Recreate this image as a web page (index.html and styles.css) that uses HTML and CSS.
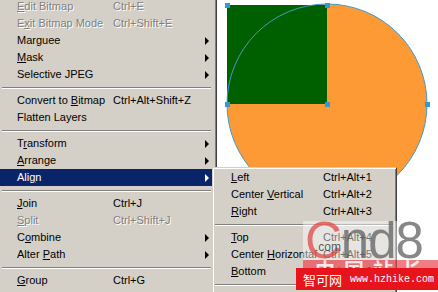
FILE: index.html
```html
<!DOCTYPE html>
<html lang="en">
<head>
  <meta charset="UTF-8" />
  <title>Modify Menu - Align</title>
  <link rel="stylesheet" href="styles.css">
</head>
<body>
  <div class="menu">
    <div class="item disabled"><span class="label"><u>E</u>dit Bitmap</span><span class="key">Ctrl+E</span></div>
    <div class="item disabled"><span class="label">E<u>x</u>it Bitmap Mode</span><span class="key">Ctrl+Shift+E</span></div>
    <div class="item"><span class="label">Marguee</span><span class="arrow"></span></div>
    <div class="item"><span class="label"><u>M</u>ask</span><span class="arrow"></span></div>
    <div class="item"><span class="label">Selective JPEG</span><span class="arrow"></span></div>
    <div class="sep"></div>
    <div class="item"><span class="label">Convert to <u>B</u>itmap</span><span class="key">Ctrl+Alt+Shift+Z</span></div>
    <div class="item"><span class="label">Flatten Layers</span></div>
    <div class="sep"></div>
    <div class="item"><span class="label">T<u>r</u>ansform</span><span class="arrow"></span></div>
    <div class="item"><span class="label"><u>A</u>rrange</span><span class="arrow"></span></div>
    <div class="item active"><span class="label">Ali<u>g</u>n</span><span class="arrow"></span></div>
    <div class="sep"></div>
    <div class="item"><span class="label"><u>J</u>oin</span><span class="key">Ctrl+J</span></div>
    <div class="item disabled"><span class="label"><u>S</u>plit</span><span class="key">Ctrl+Shift+J</span></div>
    <div class="item"><span class="label">C<u>o</u>mbine</span><span class="arrow"></span></div>
    <div class="item"><span class="label">Alter <u>P</u>ath</span><span class="arrow"></span></div>
    <div class="sep"></div>
    <div class="item"><span class="label"><u>G</u>roup</span><span class="key">Ctrl+G</span></div>
  </div>

  <div class="canvas">
    <svg width="221" height="292" viewBox="0 0 221 292">
      <circle cx="110" cy="104" r="100" fill="#fd9a35" />
      <rect x="10" y="5" width="100" height="99" fill="#006000" />
      <circle cx="110" cy="104" r="100" fill="none" stroke="#3c9ccc" stroke-width="1" />
      <g fill="#2f9ad6">
        <rect x="8" y="3" width="5" height="5" />
        <rect x="108" y="3" width="5" height="5" />
        <rect x="8" y="102" width="5" height="5" />
        <rect x="108" y="102" width="5" height="5" />
        <rect x="208" y="102" width="5" height="5" />
      </g>
    </svg>
  </div>

  <div class="submenu">
    <div class="item"><span class="label"><u>L</u>eft</span><span class="key">Ctrl+Alt+1</span></div>
    <div class="item"><span class="label">Center <u>V</u>ertical</span><span class="key">Ctrl+Alt+2</span></div>
    <div class="item"><span class="label"><u>R</u>ight</span><span class="key">Ctrl+Alt+3</span></div>
    <div class="sep"></div>
    <div class="item"><span class="label"><u>T</u>op</span><span class="key">Ctrl+Alt+4</span></div>
    <div class="item"><span class="label">Center <u>H</u>orizontal</span><span class="key">Ctrl+Alt+5</span></div>
    <div class="item"><span class="label"><u>B</u>ottom</span><span class="key">Ctrl+Alt+6</span></div>
    <div class="sep"></div>
  </div>

  <!-- watermark stamped over the screenshot -->
  <div class="watermark">
    <div class="wm-logo"><span class="wm-c">C</span>nd8<span class="wm-com">.com</span></div>
    <div class="wm-strip">中国站长下载吧</div>
    <div class="wm-bar"><span class="wm-cn">智可网</span><span class="wm-url">www.hzhike.com</span></div>
  </div>
</body>
</html>
```

FILE: styles.css
```css
* {
  margin: 0;
  padding: 0;
  box-sizing: border-box;
}

:root {
  --face: #d4d0c8;
  --shadow: #808080;
  --dark: #404040;
  --highlight: #0a246a;
}

body {
  width: 438px;
  height: 292px;
  overflow: hidden;
  position: relative;
  display: flex;
  background: #fff;
  font-family: 'Liberation Sans', Arial, sans-serif;
  font-size: 11px;
  color: #000;
}

/* Main menu (left edge cropped off) */
.menu {
  flex: none;
  width: 217px;
  margin-top: -2px;
  padding-right: 4px;
  background: var(--face);
  border-right: 1px solid var(--dark);
  box-shadow: inset -1px 0 0 var(--shadow);
}

.item {
  display: flex;
  align-items: center;
  height: 17px;
  line-height: 17px;
  padding-left: 17px;
  white-space: nowrap;
}

.menu .label {
  width: 96px;
  flex: none;
}

.key {
  flex: none;
}

.item u {
  text-decoration-thickness: 1px;
  text-underline-offset: 1px;
}

.arrow {
  margin-left: auto;
  margin-right: 3px;
  width: 0;
  height: 0;
  border-left: 4px solid #000;
  border-top: 4px solid transparent;
  border-bottom: 4px solid transparent;
}

.item.active {
  background: var(--highlight);
  color: #fff;
}

.item.active .arrow {
  border-left-color: #fff;
}

.item.disabled {
  color: var(--shadow);
  text-shadow: 1px 1px 0 #fff;
}

.sep {
  height: 9px;
  padding-top: 4px;
}

.sep::before {
  content: '';
  display: block;
  height: 1px;
  margin: 0 1px 0 2px;
  background: var(--shadow);
  border-bottom: 1px solid #fff;
  box-sizing: content-box;
}

/* Drawing area */
.canvas {
  flex: 1;
  background: #fff;
}

.canvas svg {
  display: block;
}

/* Align submenu popup */
.submenu {
  position: absolute;
  left: 212px;
  top: 167px;
  width: 185px;
  height: 125px;
  padding: 1px;
  background: var(--face);
  border: 1px solid;
  border-bottom: none;
  border-color: var(--face) var(--dark) var(--dark) var(--face);
  box-shadow: inset 1px 1px 0 #fff, inset -1px 0 0 var(--shadow);
}

.submenu .item {
  margin-left: 1px;
  padding-left: 16px;
}

.submenu .label {
  width: 92px;
  flex: none;
}

.submenu .sep::before {
  margin: 0 2px 0 1px;
}

/* Site watermark */
.watermark {
  position: absolute;
  left: 296px;
  top: 221px;
  width: 142px;
  height: 71px;
  overflow: hidden;
}

.wm-logo {
  position: relative;
  height: 39px;
  margin-left: 7px;
  padding-left: 2px;
  background: rgba(255, 255, 255, 0.45);
  font-family: 'Liberation Sans', Arial, sans-serif;
  font-size: 51px;
  line-height: 40px;
  letter-spacing: -1px;
  color: rgba(90, 90, 90, 0.72);
}

.wm-c {
  color: rgba(225, 60, 60, 0.7);
}

.wm-com {
  position: absolute;
  left: 12px;
  top: 20px;
  font-size: 12px;
  line-height: 12px;
  letter-spacing: 0;
  color: rgba(60, 60, 60, 0.85);
}

.wm-strip {
  height: 8px;
  margin-left: 7px;
  padding-left: 12px;
  overflow: hidden;
  background: rgba(235, 70, 80, 0.7);
  font-family: 'Noto Sans CJK SC', sans-serif;
  font-size: 20px;
  font-weight: 700;
  line-height: 20px;
  letter-spacing: 9px;
  color: rgba(255, 255, 255, 0.85);
}

.wm-bar {
  display: flex;
  align-items: center;
  gap: 8px;
  height: 22px;
  padding-left: 7px;
  background: #e8141c;
  color: #fff;
}

.wm-cn {
  font-family: 'Noto Sans CJK SC', sans-serif;
  font-size: 13px;
  letter-spacing: 0;
}

.wm-url {
  font-family: 'Liberation Mono', 'DejaVu Sans Mono', monospace;
  font-size: 10px;
}
```
